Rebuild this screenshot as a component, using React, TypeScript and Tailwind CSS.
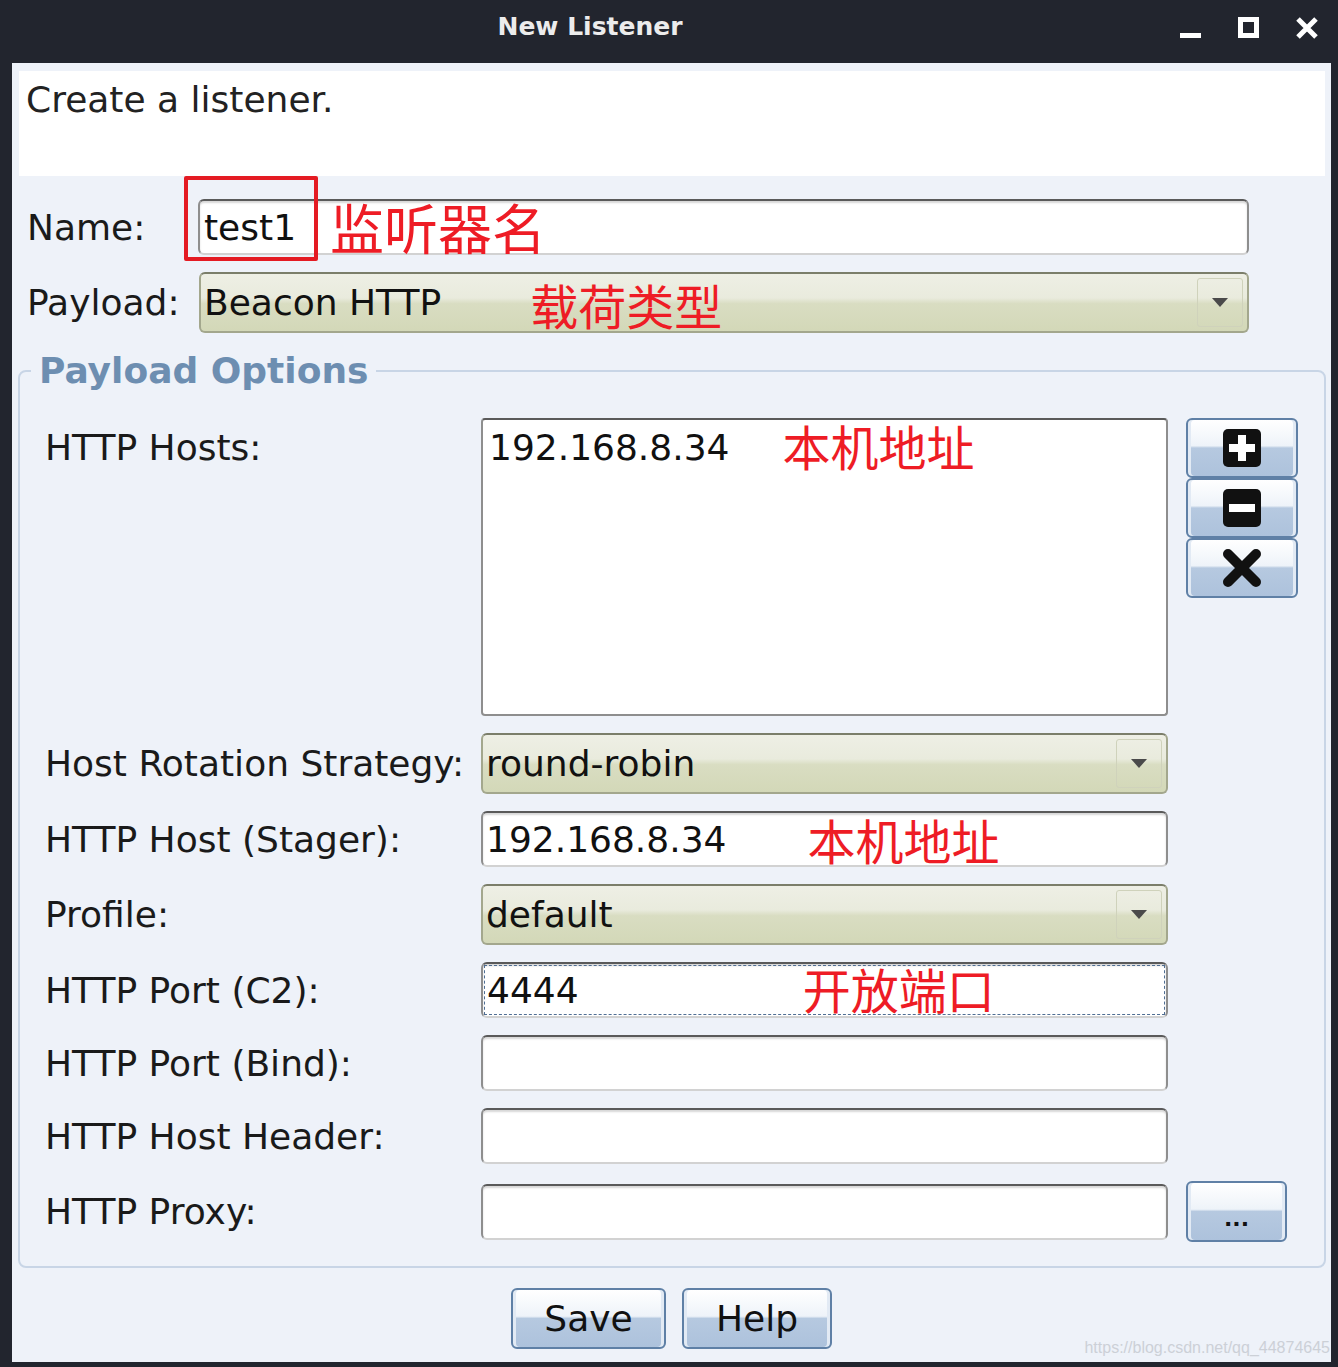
import type { ReactNode } from "react";

const red = "font-['Noto_Sans_CJK_SC',sans-serif] text-[#ee1c25] leading-none";

function BlueButton({ className, children }: { className: string; children: ReactNode }) {
  return (
    <div
      className={`${className} rounded-[6px] border-2 border-[#5f80a6] bg-[linear-gradient(180deg,#ffffff_0%,#eef3f9_46%,#b6c9e0_50%,#adc2dc_100%)] shadow-[inset_3px_0_0_#e2eaf4,inset_-3px_0_0_#e2eaf4] flex items-center justify-center`}
    >
      {children}
    </div>
  );
}

function Field({ children, focused }: { children?: ReactNode; focused?: boolean }) {
  return (
    <div className="h-[56px] w-full rounded-[6px] border-2 border-[#8e8e8e] border-t-[#5a5a5a] border-b-[#d2d2d2] bg-white shadow-[inset_0_2px_2px_rgba(0,0,0,0.16)] flex">
      <div
        className={
          focused
            ? "flex-1 m-[1px] border border-dashed border-[#4f6e93] flex items-center pl-[2px]"
            : "flex-1 flex items-center pl-[3px]"
        }
      >
        {children}
      </div>
    </div>
  );
}

function Combo({ className, children }: { className: string; children: ReactNode }) {
  return (
    <div
      className={`${className} h-[61px] rounded-[6px] border-2 border-[#a3a78d] border-t-[#7b7e6a] bg-[linear-gradient(180deg,#eeefe5_0%,#e9ebdd_42%,#d9ddc2_52%,#d3d8b8_100%)] flex items-center`}
    >
      <div className="flex-1 flex items-center pl-[3px] text-[#111]">{children}</div>
      <div className="mr-[4px] w-[46px] h-[49px] rounded-[3px] border border-[#cfd2bb] flex items-center justify-center">
        <svg width="16" height="9" viewBox="0 0 16 9">
          <polygon points="0,0 16,0 8,9" fill="#4a4a4a" />
        </svg>
      </div>
    </div>
  );
}

function Label({ children }: { children: ReactNode }) {
  return <div className="w-[436px] shrink-0 text-[#1a1a1a]">{children}</div>;
}

export default function App() {
  return (
    <div className="w-[1338px] h-[1367px] bg-[#22252e] flex flex-col font-['DejaVu_Sans',sans-serif] text-[36px] leading-[41px]">
      {/* title bar */}
      <div className="h-[63px] shrink-0 flex">
        <div className="w-[1180px] pt-[12px] text-center text-[25px] leading-[30px] font-bold text-[#ececec]">
          New Listener
        </div>
        <div className="flex items-start pt-[17px] gap-[37px] text-white">
          <svg width="21" height="22" viewBox="0 0 21 22">
            <rect x="0" y="16" width="21" height="5" fill="#fff" />
          </svg>
          <svg width="21" height="22" viewBox="0 0 21 22">
            <rect x="2.5" y="2.5" width="16" height="16" fill="none" stroke="#fff" strokeWidth="5" />
          </svg>
          <svg width="22" height="22" viewBox="0 0 22 22">
            <path d="M2 2 L20 20 M20 2 L2 20" stroke="#fff" strokeWidth="5" />
          </svg>
        </div>
      </div>

      {/* content */}
      <div className="relative flex-1 ml-[12px] mr-[7px] mb-[5px] bg-[#eef2f9] flex flex-col">
        <div className="mt-[8px] ml-[7px] mr-[6px] h-[105px] bg-white pl-[7px] pt-[8px] text-[#222]">
          Create a listener.
        </div>

        {/* Name */}
        <div className="relative mt-[23px] flex items-center">
          <div className="w-[186px] shrink-0 pl-[15px] text-[#1a1a1a]">Name:</div>
          <div className="w-[1051px]">
            <Field>
              <span className="pl-[1px] text-[#111]">test1</span>
              <span className={`${red} ml-[34px] text-[54px]`}>监听器名</span>
            </Field>
          </div>
          <div className="absolute left-[172px] top-[-23px] w-[134px] h-[85px] border-[4px] border-[#e41b23] rounded-[2px]" />
        </div>

        {/* Payload */}
        <div className="mt-[17px] flex items-center">
          <div className="w-[187px] shrink-0 pl-[15px] text-[#1a1a1a]">Payload:</div>
          <Combo className="w-[1050px]">
            <span>Beacon HTTP</span>
            <span className={`${red} ml-[89px] mt-[2px] text-[48px]`}>载荷类型</span>
          </Combo>
        </div>

        {/* Payload Options */}
        <fieldset className="mt-[17px] ml-[6px] mr-[5px] rounded-[8px] border-2 border-[#c8d5e6] pl-[25px] pt-[26px] pb-[24px]">
          <legend className="ml-[-14px] px-[8px] text-[36px] leading-[42px] font-bold text-[#6d8eb1]">
            Payload Options
          </legend>

          <div className="flex flex-col gap-[17px]">
            {/* HTTP Hosts */}
            <div className="flex items-start">
              <div className="w-[436px] shrink-0 pt-[9px] text-[#1a1a1a]">HTTP Hosts:</div>
              <div className="w-[687px] h-[298px] rounded-[4px] border-2 border-[#8e8e8e] border-t-[#5a5a5a] bg-white">
                <div className="mt-[2px] pl-[6px] h-[46px] flex items-center">
                  <span className="text-[#111] mt-[4px]">192.168.8.34</span>
                  <span className={`${red} ml-[53px] text-[48px]`}>本机地址</span>
                </div>
              </div>
              <div className="ml-[18px] flex flex-col">
                <BlueButton className="w-[112px] h-[60px]">
                  <svg width="38" height="38" viewBox="0 0 38 38">
                    <rect x="0" y="0" width="38" height="38" rx="5" fill="#111" />
                    <rect x="15" y="6" width="8" height="26" fill="#fff" />
                    <rect x="6" y="15" width="26" height="8" fill="#fff" />
                  </svg>
                </BlueButton>
                <BlueButton className="w-[112px] h-[60px]">
                  <svg width="38" height="38" viewBox="0 0 38 38">
                    <rect x="0" y="0" width="38" height="38" rx="5" fill="#111" />
                    <rect x="6" y="15" width="26" height="8" fill="#fff" />
                  </svg>
                </BlueButton>
                <BlueButton className="w-[112px] h-[60px]">
                  <svg width="40" height="38" viewBox="0 0 40 38">
                    <path d="M6 5 L34 33 M34 5 L6 33" stroke="#111" strokeWidth="10" strokeLinecap="round" />
                  </svg>
                </BlueButton>
              </div>
            </div>

            <div className="flex items-center">
              <Label>Host Rotation Strategy:</Label>
              <Combo className="w-[687px]">
                <span>round-robin</span>
              </Combo>
            </div>

            <div className="flex items-center">
              <Label>HTTP Host (Stager):</Label>
              <div className="w-[687px]">
                <Field>
                  <span className="text-[#111]">192.168.8.34</span>
                  <span className={`${red} ml-[81px] text-[48px]`}>本机地址</span>
                </Field>
              </div>
            </div>

            <div className="flex items-center">
              <Label>Profile:</Label>
              <Combo className="w-[687px]">
                <span>default</span>
              </Combo>
            </div>

            <div className="flex items-center">
              <Label>HTTP Port (C2):</Label>
              <div className="w-[687px]">
                <Field focused>
                  <span className="text-[#111]">4444</span>
                  <span className={`${red} ml-[224px] mb-[4px] text-[48px]`}>开放端口</span>
                </Field>
              </div>
            </div>

            <div className="flex items-center">
              <Label>HTTP Port (Bind):</Label>
              <div className="w-[687px]">
                <Field />
              </div>
            </div>

            <div className="flex items-center">
              <Label>HTTP Host Header:</Label>
              <div className="w-[687px]">
                <Field />
              </div>
            </div>

            <div className="flex items-center">
              <Label>HTTP Proxy:</Label>
              <div className="w-[687px]">
                <Field />
              </div>
              <BlueButton className="ml-[18px] w-[101px] h-[61px]">
                <span className="mt-[14px] text-[22px] leading-none font-bold text-[#111]">...</span>
              </BlueButton>
            </div>
          </div>
        </fieldset>

        <div className="mt-[20px] flex justify-center gap-[16px]">
          <BlueButton className="w-[155px] h-[61px]">
            <span className="text-[#111]">Save</span>
          </BlueButton>
          <BlueButton className="w-[150px] h-[61px]">
            <span className="text-[#111]">Help</span>
          </BlueButton>
        </div>

        <div className="absolute right-[1px] bottom-[4px] font-['Liberation_Sans',sans-serif] text-[16px] leading-[20px] text-[#ccd0d7]">
          https://blog.csdn.net/qq_44874645
        </div>
      </div>
    </div>
  );
}
